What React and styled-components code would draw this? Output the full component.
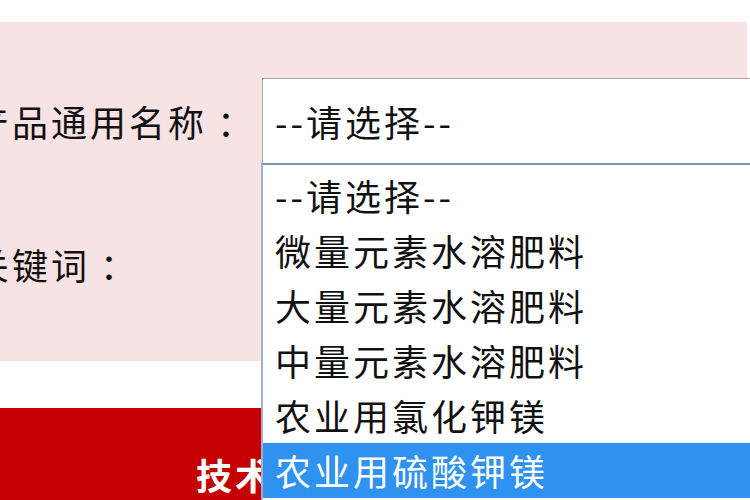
import React from "react";
import styled, { createGlobalStyle } from "styled-components";

const GlobalStyle = createGlobalStyle`
  html, body {
    margin: 0;
    padding: 0;
    background: #ffffff;
    overflow: hidden;
  }
  body {
    font-family: "Noto Sans CJK SC", "Liberation Sans", sans-serif;
  }
`;

const OPTIONS = [
  "--请选择--",
  "微量元素水溶肥料",
  "大量元素水溶肥料",
  "中量元素水溶肥料",
  "农业用氯化钾镁",
  "农业用硫酸钾镁",
];

function App() {
  return (
    <StPage>
      <GlobalStyle />
      <StPanel>
        <StRow>
          <StLabel>
            产品通用名称<StColon>：</StColon>
          </StLabel>
          <StSelectWrap>
            <StSelect>--请选择--</StSelect>
            <StList>
              {OPTIONS.map((x, index) => (
                <StOption key={index} $active={index === OPTIONS.length - 1}>
                  {x}
                </StOption>
              ))}
            </StList>
          </StSelectWrap>
        </StRow>
        <StKeywordRow>
          <StLabel>
            关键词<StColon>：</StColon>
          </StLabel>
        </StKeywordRow>
      </StPanel>
      <StFooter>
        <StFooterText>技术支持</StFooterText>
      </StFooter>
    </StPage>
  );
}

export default App;

const StPage = styled.div`
  width: 750px;
  height: 500px;
  padding-top: 22px;
  box-sizing: border-box;
  overflow: hidden;
`;

const StPanel = styled.div`
  width: 747px;
  height: 339px;
  background-color: #f8e3e4;
  padding-top: 56px;
  box-sizing: border-box;
  position: relative;
  z-index: 2;
`;

const StRow = styled.div`
  display: flex;
  flex-direction: row;
  align-items: center;
  height: 85px;
`;

const StKeywordRow = styled.div`
  display: flex;
  flex-direction: row;
  align-items: center;
  margin-top: 74px;
  height: 54px;
`;

const StLabel = styled.div`
  width: 289px;
  margin-left: -27px;
  flex-shrink: 0;
  font-size: 36px;
  letter-spacing: 3px;
  color: #111111;
  white-space: nowrap;
`;

const StColon = styled.span`
  margin-left: 10px;
`;

const StSelectWrap = styled.div`
  position: relative;
  flex: 1;
  height: 85px;
  margin-right: -20px;
`;

const StSelect = styled.div`
  height: 85px;
  box-sizing: border-box;
  border: 1px solid #a9a9a9;
  border-bottom: none;
  background-color: #ffffff;
  padding-left: 12px;
  display: flex;
  align-items: center;
  font-size: 36px;
  letter-spacing: 3px;
  color: #111111;
  white-space: nowrap;
`;

const StList = styled.div`
  position: absolute;
  top: 85px;
  left: -1px;
  right: 0;
  height: 360px;
  background-color: #ffffff;
  border-top: 2px solid #8193cb;
  border-left: 2px solid #a3afcc;
  padding-top: 3px;
  box-sizing: border-box;
`;

const StOption = styled.div`
  height: 55px;
  line-height: 55px;
  padding-left: 12px;
  font-size: 36px;
  letter-spacing: 3px;
  white-space: nowrap;
  color: ${(p) => (p.$active ? "#ffffff" : "#111111")};
  background-color: ${(p) => (p.$active ? "#2f92f0" : "transparent")};
`;

const StFooter = styled.div`
  margin-top: 47px;
  height: 100px;
  background-color: #c40000;
  padding-left: 196px;
  padding-top: 46px;
  box-sizing: border-box;
`;

const StFooterText = styled.div`
  font-size: 36px;
  font-weight: bold;
  color: #ffffff;
  line-height: 40px;
  letter-spacing: 3px;
  white-space: nowrap;
`;
